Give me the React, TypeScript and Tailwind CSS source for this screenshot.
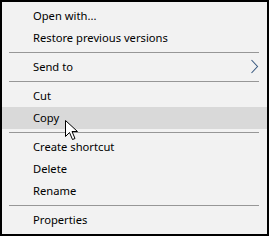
import React from "react";

type Entry = { type: "item"; label: string; hi?: boolean; sub?: boolean } | { type: "sep" };

const entries: Entry[] = [
  { type: "item", label: "Open with..." },
  { type: "item", label: "Restore previous versions" },
  { type: "sep" },
  { type: "item", label: "Send to", sub: true },
  { type: "sep" },
  { type: "item", label: "Cut" },
  { type: "item", label: "Copy", hi: true },
  { type: "sep" },
  { type: "item", label: "Create shortcut" },
  { type: "item", label: "Delete" },
  { type: "item", label: "Rename" },
  { type: "sep" },
  { type: "item", label: "Properties" },
];

export default function App() {
  return (
    <div
      className="relative w-[269px] h-[236px] border-2 border-black bg-[#f2f2f2] pt-[3px] pb-[3px] text-[11.2px] text-black"
      style={{ fontFamily: '"Noto Sans", "Open Sans", sans-serif' }}
    >
      {entries.map((e, i) =>
        e.type === "sep" ? (
          <div key={i} className="h-[7px] pt-[3px]">
            <div className="h-px ml-[7px] mr-[8px] bg-[#979797]" />
          </div>
        ) : (
          <div
            key={i}
            className={`relative flex items-center h-[22px] pl-[31px] ${e.hi ? "bg-[#d9d9d9]" : ""}`}
          >
            <span className="leading-none">{e.label}</span>
            {e.sub && (
              <svg className="absolute left-[248px] top-[3px]" width="9" height="15" viewBox="0 0 9 15">
                <path d="M1.5 1 L7.5 7.5 L1.5 14" fill="none" stroke="#3a5a80" strokeWidth="1.1" />
              </svg>
            )}
          </div>
        )
      )}
      <svg className="absolute left-[63px] top-[118px]" width="14" height="22" viewBox="0 0 14 22">
        <path
          d="M0.5 0.5 L0.5 16.5 L4.5 12.5 L7.5 19.5 L10 18.5 L7 11.5 L12.5 11.5 Z"
          fill="#fff"
          stroke="#000"
          strokeWidth="1"
          strokeLinejoin="miter"
        />
      </svg>
    </div>
  );
}
